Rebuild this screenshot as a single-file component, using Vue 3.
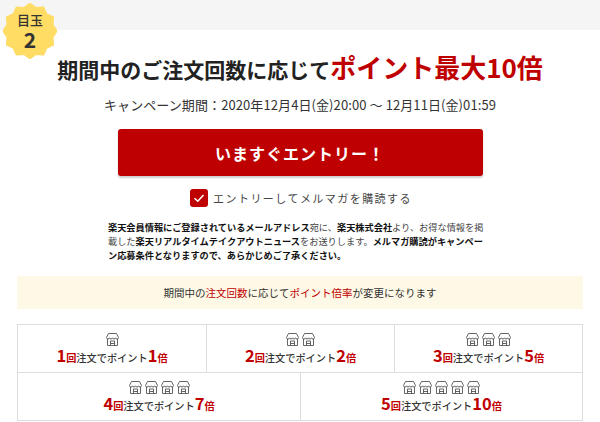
<script setup>
const top = [
  { icons: 1, n: 1, x: 1 },
  { icons: 2, n: 2, x: 2 },
  { icons: 3, n: 3, x: 5 }
]
const bottom = [
  { icons: 4, n: 4, x: 7 },
  { icons: 5, n: 5, x: 10 }
]
const points = 12
let star = ''
for (let i = 0; i < points * 2; i++) {
  const r = i % 2 === 0 ? 27 : 23.5
  const a = (Math.PI * i) / points - Math.PI / 2
  star += (i === 0 ? 'M' : 'L') + (27 + r * Math.cos(a)).toFixed(2) + ' ' + (28 + r * 1.02 * Math.sin(a)).toFixed(2) + ' '
}
star += 'Z'
</script>

<template>
  <div class="page">
    <div class="topband"></div>
    <div class="badge">
      <svg class="star" viewBox="0 0 54 56" width="54" height="56">
        <path :d="star" fill="#ffdc64" stroke="#ffdc64" stroke-width="1.5" stroke-linejoin="round"/>
      </svg>
      <div class="badge-text">
        <span class="b1">目玉</span>
        <span class="b2">2</span>
      </div>
    </div>

    <main class="content">
      <h1 class="title">期間中のご注文回数に応じて<em>ポイント最大10倍</em></h1>
      <p class="period">キャンペーン期間：2020年12月4日(金)20:00 ～ 12月11日(金)01:59</p>
      <button class="cta">いますぐエントリー！</button>
      <div class="check">
        <span class="box">
          <svg viewBox="0 0 18 18" width="18" height="18"><path d="M4.5 9.3 L7.8 12.3 L13.5 6" fill="none" stroke="#fff" stroke-width="1.5"/></svg>
        </span>
        <span class="check-label">エントリーしてメルマガを購読する</span>
      </div>
      <p class="note"><b>楽天会員情報にご登録されているメールアドレス</b>宛に、<b>楽天株式会社</b>より、お得な情報を掲載した<b>楽天リアルタイムテイクアウトニュース</b>をお送りします。<b>メルマガ購読がキャンペーン応募条件となりますので、あらかじめご了承ください。</b></p>
      <div class="notice">期間中の<span class="red">注文回数</span>に応じて<span class="red">ポイント倍率</span>が変更になります</div>

      <div class="table">
        <div class="row three">
          <div v-for="c in top" :key="c.n" class="cell">
            <div class="icons">
              <svg v-for="i in c.icons" :key="i" class="shop" viewBox="0 0 13 13" width="13" height="13">
                <path d="M2.5 .5 H10.5 L12.5 4.5 Q12.5 6 11 6 Q9.7 6 9.5 4.8 Q9.2 6 8 6 Q6.8 6 6.5 4.8 Q6.2 6 5 6 Q3.8 6 3.5 4.8 Q3.3 6 2 6 Q.5 6 .5 4.5 Z M1.5 6 V12.5 H11.5 V6 M4.5 12.5 V8 H8.5 V12.5 M4.5 10.5 H8.5" fill="none" stroke="#555" stroke-width=".9"/>
              </svg>
            </div>
            <div class="label"><span class="num">{{ c.n }}</span><span class="unit">回</span>注文でポイント<span class="num">{{ c.x }}</span><span class="unit">倍</span></div>
          </div>
        </div>
        <div class="row two">
          <div v-for="c in bottom" :key="c.n" class="cell">
            <div class="icons">
              <svg v-for="i in c.icons" :key="i" class="shop" viewBox="0 0 13 13" width="13" height="13">
                <path d="M2.5 .5 H10.5 L12.5 4.5 Q12.5 6 11 6 Q9.7 6 9.5 4.8 Q9.2 6 8 6 Q6.8 6 6.5 4.8 Q6.2 6 5 6 Q3.8 6 3.5 4.8 Q3.3 6 2 6 Q.5 6 .5 4.5 Z M1.5 6 V12.5 H11.5 V6 M4.5 12.5 V8 H8.5 V12.5 M4.5 10.5 H8.5" fill="none" stroke="#555" stroke-width=".9"/>
              </svg>
            </div>
            <div class="label"><span class="num">{{ c.n }}</span><span class="unit">回</span>注文でポイント<span class="num">{{ c.x }}</span><span class="unit">倍</span></div>
          </div>
        </div>
      </div>
    </main>
  </div>
</template>

<style>
html, body { margin: 0; background: #fff; }
</style>

<style scoped>
.page {
  position: relative;
  width: 600px;
  height: 422px;
  overflow: hidden;
  background: #fff;
  color: #333;
  font-family: "Noto Sans CJK JP", "Noto Sans", sans-serif;
}
.topband { height: 30px; background: #f5f5f5; }
.badge {
  position: absolute;
  left: 3px;
  top: 3px;
  width: 54px;
  height: 56px;
}
.star { display: block; }
.badge-text {
  position: absolute;
  inset: 0;
  display: flex;
  flex-direction: column;
  align-items: center;
  padding-top: 9px;
  color: #333;
  font-weight: 700;
}
.b1 { font-size: 13px; line-height: 16px; font-weight: 500; }
.b2 { font-size: 21px; line-height: 22px; }
.content {
  display: flex;
  flex-direction: column;
  align-items: center;
  padding: 0 17px;
}
.title {
  margin: 19px 0 0;
  font-size: 21px;
  line-height: 36px;
  font-weight: 700;
  color: #222;
  white-space: nowrap;
}
.title em { font-style: normal; color: #bf0000; font-size: 26px; }
.period {
  margin: 7px 0 0;
  font-size: 13px;
  letter-spacing: .09px;
  line-height: 22px;
  white-space: nowrap;
}
.cta {
  margin-top: 13px;
  width: 365px;
  height: 47px;
  border: 0;
  border-radius: 3px;
  background: #bf0000;
  box-shadow: 0 2px 2px rgba(0,0,0,.2);
  color: #fff;
  font-family: inherit;
  font-size: 16px;
  font-weight: 700;
  letter-spacing: 1px;
}
.check {
  margin-top: 13px;
  margin-left: 2px;
  display: flex;
  align-items: center;
  gap: 5px;
}
.box {
  width: 18px;
  height: 18px;
  border-radius: 3px;
  background: #bf0000;
  display: block;
}
.box svg { display: block; }
.check-label { font-size: 11px; letter-spacing: 1.45px; color: #444; line-height: 18px; }
.note {
  margin: 13px 0 0 91px;
  align-self: flex-start;
  width: 380px;
  font-size: 9.2px;
  line-height: 14px;
  color: #444;
}
.note b { color: #111; font-weight: 700; }
.notice {
  margin-top: 14px;
  align-self: stretch;
  height: 33px;
  line-height: 33px;
  text-align: center;
  background: #fef9e6;
  font-size: 10.5px;
}
.red { color: #bf0000; }
.table {
  margin-top: 15px;
  align-self: stretch;
  border: 1px solid #ddd;
  border-width: 1px 1px 0 1px;
}
.row { display: grid; border-bottom: 1px solid #ddd; }
.three { grid-template-columns: repeat(3, 1fr); }
.two { grid-template-columns: 1fr 1fr; }
.cell {
  height: 47px;
  display: flex;
  flex-direction: column;
  align-items: center;
  padding-top: 8px;
  box-sizing: border-box;
  border-left: 1px solid #ddd;
}
.cell:first-child { border-left: 0; }
.icons { display: flex; gap: 3px; height: 13px; }
.shop { display: block; }
.label {
  font-size: 10.2px;
  font-weight: 500;
  line-height: 18px;
  color: #333;
  white-space: nowrap;
  display: flex;
  align-items: baseline;
}
.num { font-size: 16.5px; font-weight: 700; color: #bf0000; line-height: 18px; }
.unit { font-size: 10.2px; color: #bf0000; font-weight: 700; margin: 0; }
</style>
